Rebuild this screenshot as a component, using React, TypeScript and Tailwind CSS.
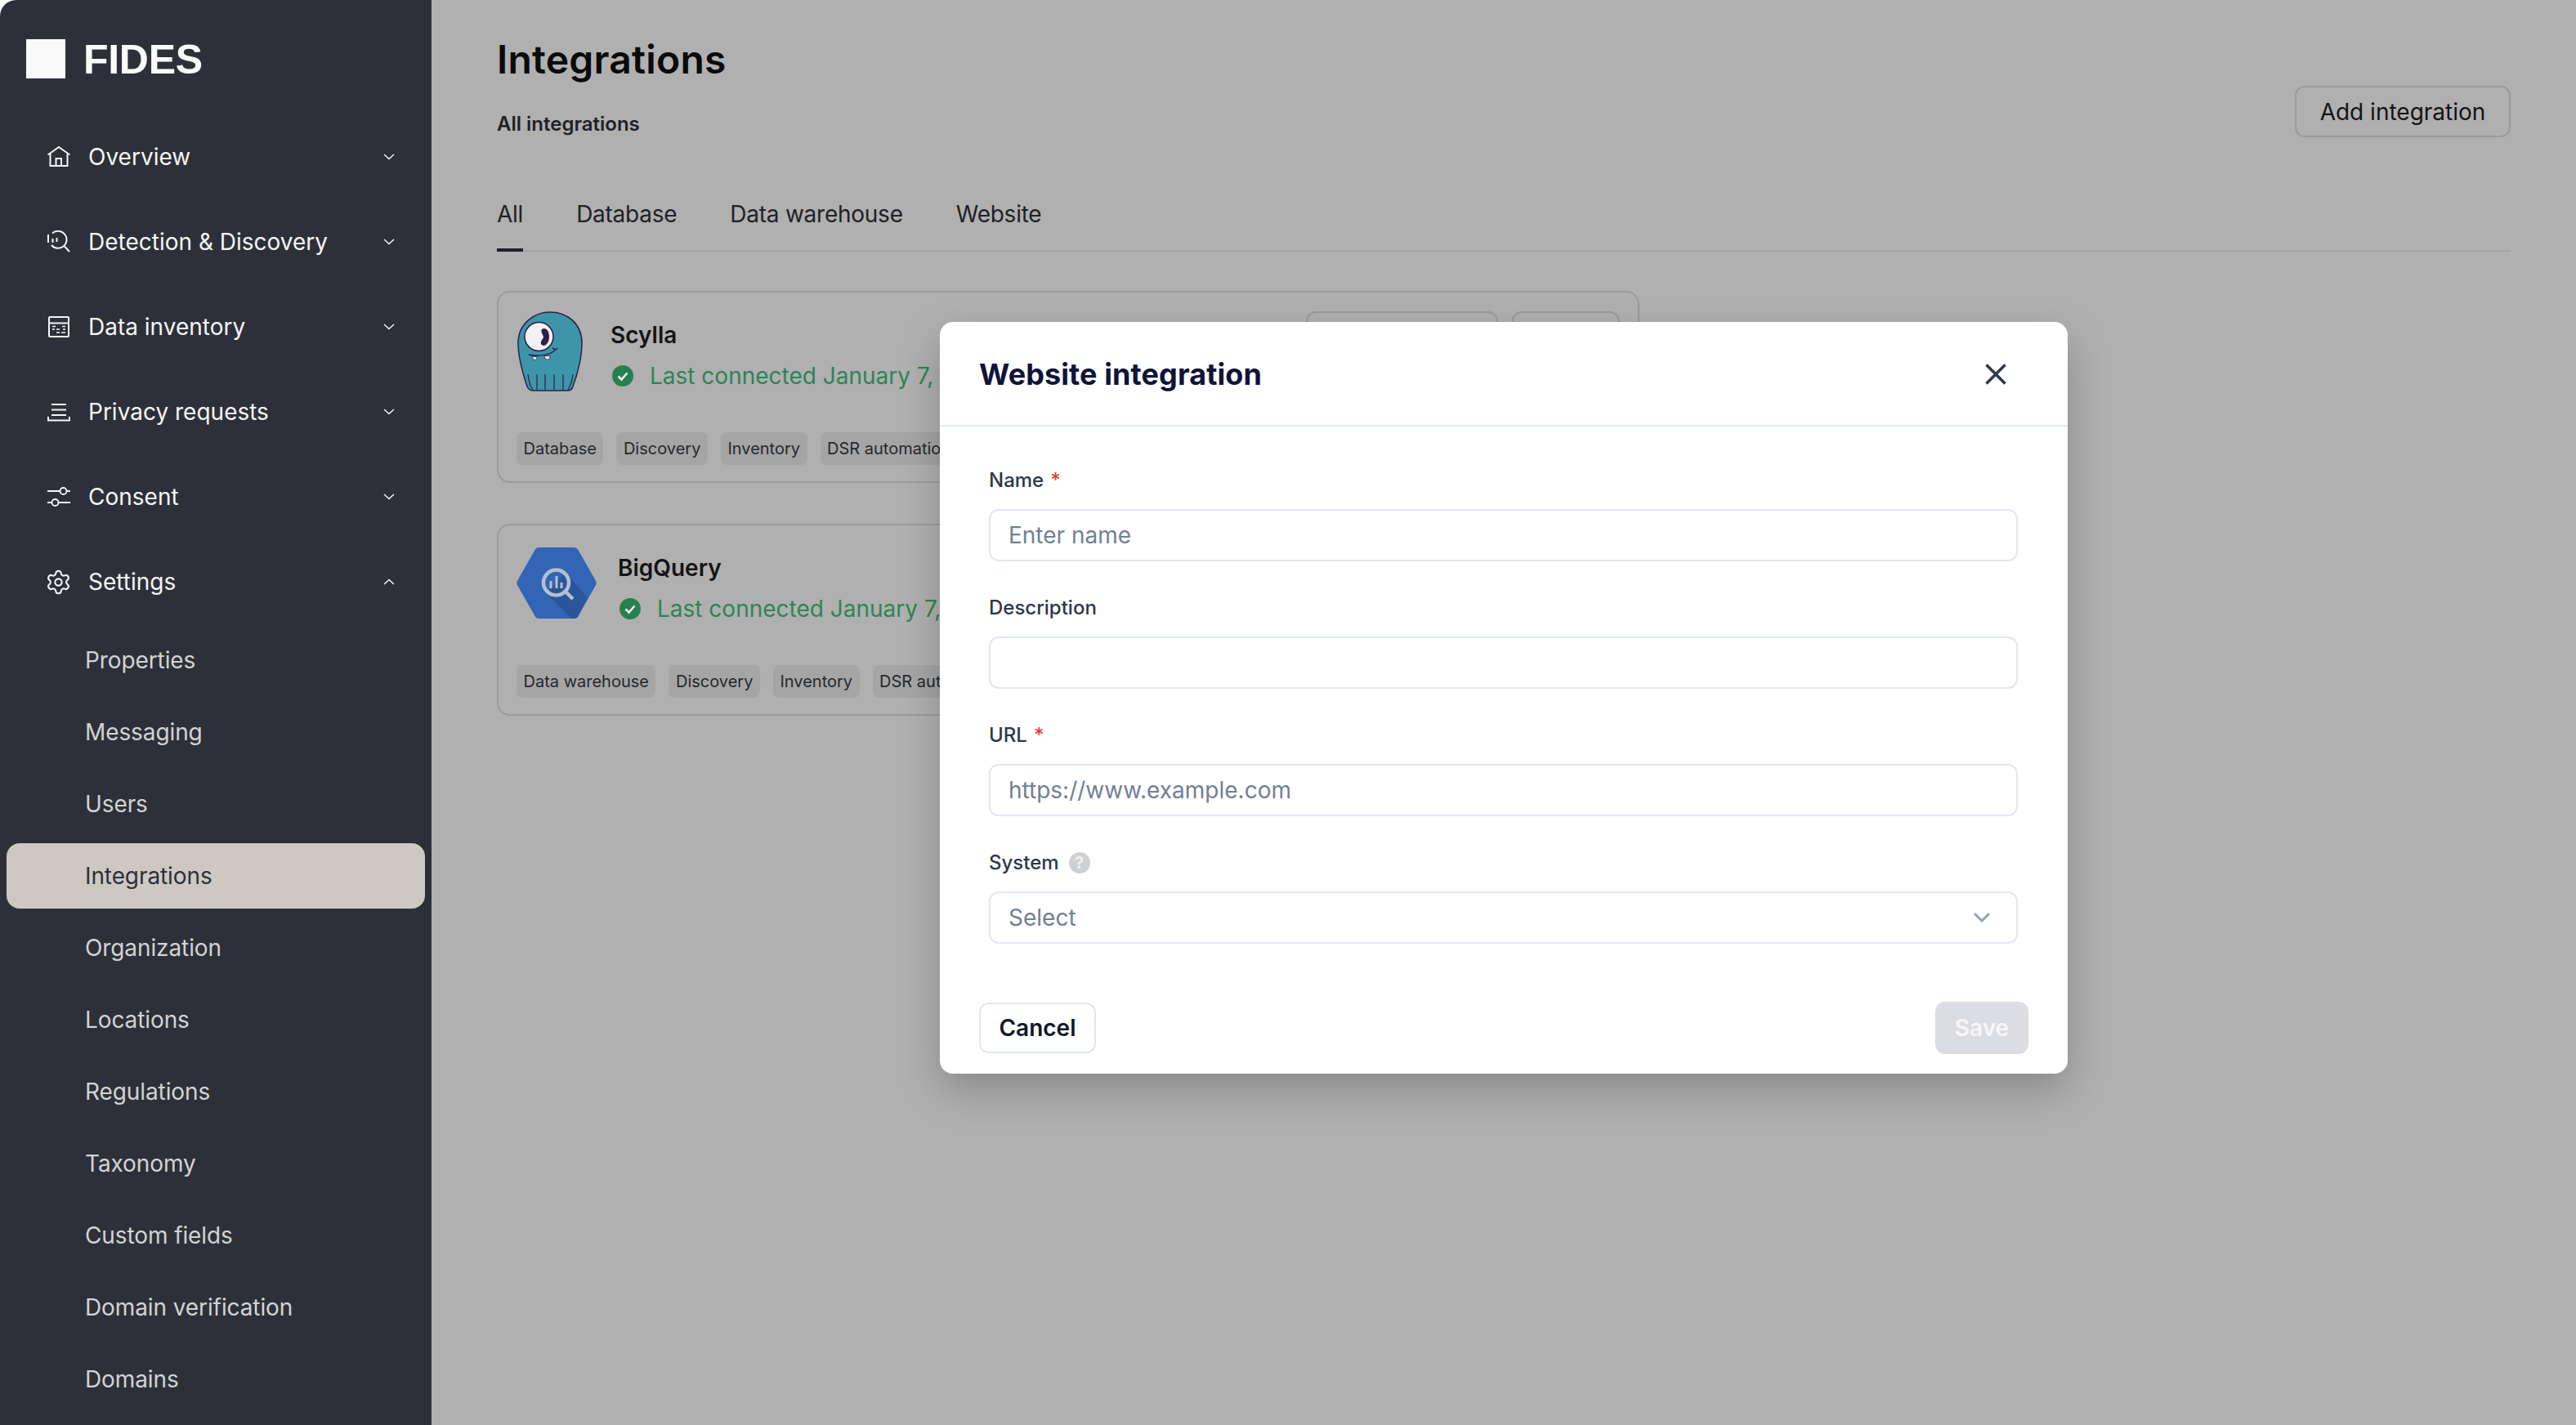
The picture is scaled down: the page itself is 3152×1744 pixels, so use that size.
import { Settings } from "lucide-react";

const fontStack = "font-['Inter','Noto_Sans',sans-serif]";

const HomeIcon = () => (
  <svg width="28" height="28" viewBox="0 0 28 28" fill="none" stroke="currentColor" strokeWidth="2">
    <path d="M0.5 11.5 14 2 27.5 11.5" />
    <path d="M3.5 10V25H24.5V10" />
    <path d="M10.5 25V16H17V25" />
  </svg>
);

const DetectionIcon = () => (
  <svg width="28" height="28" viewBox="0 0 28 28" fill="none" stroke="currentColor" strokeWidth="2">
    <path d="M6 3.5A10.5 10.5 0 1 1 5 18" />
    <path d="M21 19.5 27 26" />
    <path d="M1 5V15M6.5 10V15M11.5 9V14" />
  </svg>
);

const InventoryIcon = () => (
  <svg width="28" height="28" viewBox="0 0 28 28" fill="none" stroke="currentColor" strokeWidth="2">
    <rect x="2" y="2" width="24" height="24" rx="1" />
    <path d="M2 9.5H26" />
    <path strokeWidth="1.5" d="M6 13.5H10M18 13.5H22M6 17H9M11 17H15M19 17H22M11 21H15M17 21H22" />
  </svg>
);

const RequestsIcon = () => (
  <svg width="28" height="28" viewBox="0 0 28 28" fill="none" stroke="currentColor" strokeWidth="2">
    <path d="M5 5H23M5 11.5H23M5 18H23" />
    <path d="M1 20V24.5H27V20" />
  </svg>
);

const ConsentIcon = () => (
  <svg width="28" height="28" viewBox="0 0 28 28" fill="none" stroke="currentColor" strokeWidth="1.8">
    <path d="M0 7H15M24 7H28M0 21H5M14 21H28" />
    <circle cx="19.5" cy="7" r="4" />
    <circle cx="9.5" cy="21" r="4" />
  </svg>
);

const Chevron = ({ up }: { up?: boolean }) => (
  <svg width="14" height="8" viewBox="0 0 14 8" fill="none" stroke="currentColor" strokeWidth="1.5" className={up ? "rotate-180" : ""}>
    <path d="M1 1 7 6.5 13 1" />
  </svg>
);

const ScyllaLogo = () => (
  <svg width="80" height="98" viewBox="13 11 80 98" className="ml-[1px] shrink-0">
    <path
      d="M14 50C14 25 35 12 53 12C73 12 92 25 92 50C92 68 86 90 81 103C80 107 77 108 74 108H32C29 108 27 107 25 103C20 88 14 68 14 50Z"
      fill="#3f95a8"
      stroke="#2a1f4d"
      strokeWidth="1.5"
    />
    <circle cx="39.5" cy="42" r="17.5" fill="#f2f2f4" stroke="#2a1f4d" strokeWidth="1.5" />
    <path d="M43 33C47 30 52 34 52 42C52 50 47 55 43 52C40 50 43 46 45 43C45 40 41 36 43 33Z" fill="#2a1f4d" />
    <path d="M27 64C36 66 50 66 59 59M56 55.5C58 58 60 59 62 56" fill="none" stroke="#2a1f4d" strokeWidth="1.5" />
    <path d="M31 66.5H37C37 70 35 71 34 70.5C32.5 70 31.5 68 31 66.5ZM46 65.5H53C53 70 51 70 49.5 70C47.5 70 46.5 68 46 65.5Z" fill="#e8e8e8" stroke="#2a1f4d" strokeWidth="0.8" />
    <path d="M26 88C27 96 28 102 32 107M37 88V107M47 88V107M58 88V107M69 88V107M81 88C80 96 78 102 75 107" fill="none" stroke="#2a1f4d" strokeWidth="1.2" />
  </svg>
);

const BigQueryLogo = () => (
  <svg width="98" height="87" viewBox="0 0 98 87" className="mt-[4px] shrink-0">
    <path
      d="M22 4C23 1.5 25 0 28 0H70C73 0 75 1.5 76 4L96.5 40C98 42.5 98 44.5 96.5 47L76 83C75 85.5 73 87 70 87H28C25 87 23 85.5 22 83L1.5 47C0 44.5 0 42.5 1.5 40Z"
      fill="#3265b5"
    />
    <path d="M37 57 60 30 87 62 76 83C75 85.5 73 87 70 87H67Z" fill="#2b559b" />
    <circle cx="48.5" cy="43" r="15.5" fill="none" stroke="#b5bfcf" strokeWidth="4.5" />
    <path d="M60 54 69 63" stroke="#b5bfcf" strokeWidth="4.5" />
    <path d="M42 41V50M49 35V50M55 43V50" stroke="#b5bfcf" strokeWidth="3" />
  </svg>
);

const CheckBadge = () => (
  <svg width="26" height="26" viewBox="0 0 26 26" className="ml-[2px] shrink-0">
    <circle cx="13" cy="13" r="13" fill="#277f51" />
    <path d="M7.5 13.5 11.5 17.5 18.5 9.5" fill="none" stroke="#e8efe9" strokeWidth="2.6" />
  </svg>
);

const mainNav = [
  { label: "Overview", icon: <HomeIcon /> },
  { label: "Detection & Discovery", icon: <DetectionIcon /> },
  { label: "Data inventory", icon: <InventoryIcon /> },
  { label: "Privacy requests", icon: <RequestsIcon /> },
  { label: "Consent", icon: <ConsentIcon /> },
];

const settingsNav = [
  "Properties",
  "Messaging",
  "Users",
  "Integrations",
  "Organization",
  "Locations",
  "Regulations",
  "Taxonomy",
  "Custom fields",
  "Domain verification",
  "Domains",
];

const integrations = [
  {
    name: "Scylla",
    logo: <ScyllaLogo />,
    gap: "ml-[34px]",
    tags: ["Database", "Discovery", "Inventory", "DSR automation"],
  },
  {
    name: "BigQuery",
    logo: <BigQueryLogo />,
    gap: "ml-[26px]",
    tags: ["Data warehouse", "Discovery", "Inventory", "DSR automation"],
  },
];

const NavRow = ({ label, icon, open }: { label: string; icon: React.ReactNode; open?: boolean }) => (
  <div className="flex h-[104px] items-center pl-[58px] pr-[45px] text-[#f5f5f6]">
    <span className="flex w-[50px] shrink-0">{icon}</span>
    <span className="flex-1 text-[28px]">{label}</span>
    <Chevron up={open} />
  </div>
);

const Sidebar = () => (
  <aside className="h-full w-[528px] shrink-0 overflow-hidden rounded-tl-[20px] bg-[#2d3038]">
    <div className="flex h-[140px] items-start pl-[32px] pt-[48px]">
      <div className="h-[48px] w-[48px] bg-[#fafafa]" />
      <span className="ml-[22px] mt-[1px] font-['Liberation_Sans',sans-serif] text-[50px] font-bold leading-[48px] tracking-[-0.3px] text-[#fafafa]">
        FIDES
      </span>
    </div>
    {mainNav.map((item) => (
      <NavRow key={item.label} label={item.label} icon={item.icon} />
    ))}
    <NavRow label="Settings" icon={<Settings size={33} strokeWidth={1.5} className="-ml-[3px] -my-[3px] shrink-0" />} open />
    <div className="flex flex-col gap-[8px] px-[8px] pt-[4px]">
      {settingsNav.map((item) => (
        <div
          key={item}
          className={`flex h-[80px] items-center rounded-[16px] pl-[96px] text-[28px] tracking-[-0.1px] ${
            item === "Integrations" ? "bg-[#cdc9c2] text-[#2d3038]" : "text-[#d2d3d6]"
          }`}
        >
          {item}
        </div>
      ))}
    </div>
  </aside>
);

const IntegrationCard = ({ item }: { item: (typeof integrations)[number] }) => (
  <div className="h-[235px] w-[1398px] rounded-[16px] border-2 border-[#9b9b9b] px-[22px] pt-[23px]">
    <div className="flex h-[98px] items-start">
      {item.logo}
      <div className={`${item.gap} pt-[9px]`}>
        <div className="text-[28px] font-semibold leading-[40px] text-[#141414]">{item.name}</div>
        <div className="mt-[10px] flex h-[40px] items-center text-[28px] text-[#2e8457]">
          <CheckBadge />
          <span className="ml-[20px]">Last connected January 7,</span>
        </div>
      </div>
      <div className="ml-auto flex gap-[17px]">
        <div className="h-[64px] w-[235px] rounded-[12px] border-2 border-[#9b9b9b]" />
        <div className="h-[64px] w-[132px] rounded-[12px] border-2 border-[#9b9b9b]" />
      </div>
    </div>
    <div className="mt-[50px] flex gap-[16px]">
      {item.tags.map((tag) => (
        <span key={tag} className="flex h-[40px] items-center rounded-[8px] bg-[#a5a5a5] px-[8.5px] text-[20px] text-[#26282d]">
          {tag}
        </span>
      ))}
    </div>
  </div>
);

const Field = ({ label, required, help, children }: { label: string; required?: boolean; help?: boolean; children: React.ReactNode }) => (
  <div className="mb-[41px] last:mb-0">
    <div className="mb-[19px] flex h-[32px] items-center text-[24px] font-medium text-[#2d3748]">
      {label}
      {required && <span className="ml-[8px] text-[#e53e3e]">*</span>}
      {help && (
        <span className="ml-[12px] flex h-[26px] w-[26px] items-center justify-center rounded-full bg-[#cfd0d2] text-[20px] font-bold text-[#f2f2f2]">
          ?
        </span>
      )}
    </div>
    {children}
  </div>
);

const inputClass =
  "block h-[64px] w-full rounded-[12px] border-2 border-[#e2e8f0] bg-white px-[22px] text-[28px] outline-none placeholder:text-[#718096]";

const WebsiteModal = () => (
  <div className="h-[920px] w-[1380px] rounded-[16px] bg-white shadow-[0_20px_50px_rgba(0,0,0,0.22)]">
    <div className="flex h-[128px] items-center justify-between border-b-2 border-[#e2e8f0] pl-[48px] pr-[75px]">
      <h2 className="pt-[2px] text-[36px] font-bold tracking-[0.1px] text-[#0f1438]">Website integration</h2>
      <svg width="26" height="26" viewBox="0 0 26 26" fill="none" stroke="#2d3748" strokeWidth="3.5" className="mt-[2px]">
        <path d="M1.5 1.5 24.5 24.5M24.5 1.5 1.5 24.5" />
      </svg>
    </div>
    <div className="pl-[60px] pr-[61px] pt-[50px]">
      <Field label="Name" required>
        <input className={inputClass} placeholder="Enter name" />
      </Field>
      <Field label="Description">
        <input className={inputClass} />
      </Field>
      <Field label="URL" required>
        <input className={inputClass} placeholder="https://www.example.com" />
      </Field>
      <Field label="System" help>
        <div className="flex h-[64px] items-center justify-between rounded-[12px] border-2 border-[#e2e8f0] pl-[22px] pr-[32px] text-[28px] text-[#718096]">
          Select
          <svg width="20" height="12" viewBox="0 0 20 12" fill="none" stroke="#94a3b8" strokeWidth="3">
            <path d="M1 1 10 10 19 1" />
          </svg>
        </div>
      </Field>
    </div>
    <div className="mt-[71px] flex items-center justify-between px-[48px]">
      <button className="h-[62px] w-[143px] rounded-[12px] border-2 border-[#e2e8f0] bg-white text-[28px] font-semibold text-[#111827]">
        Cancel
      </button>
      <button className="h-[64px] w-[114px] rounded-[12px] bg-[#dcdde2] text-[28px] font-semibold text-[#f7f7f9]">
        Save
      </button>
    </div>
  </div>
);

export default function App() {
  return (
    <div className={`${fontStack} flex h-[1744px] w-[3152px] overflow-hidden bg-white`}>
      <Sidebar />
      <main className="relative flex-1 bg-[#b0b0b0] pl-[80px] pr-[80px] pt-[43px] text-[#141414]">
        <h1 className="text-[48px] font-semibold leading-[60px] tracking-[0.2px] text-[#0a0a0a]">Integrations</h1>
        <div className="mt-[1px] flex h-[64px] items-end justify-between">
          <span className="text-[24px] font-semibold leading-[32px] text-[#1f2126]">All integrations</span>
          <button className="h-[63px] w-[264px] rounded-[12px] border-2 border-[#9b9b9b] text-[28px] text-[#141414]">
            Add integration
          </button>
        </div>
        <div className="mt-[74px] flex gap-[65px] border-b-2 border-[#a3a3a3] text-[28px] leading-[40px] tracking-[-0.25px] text-[#1f2126]">
          <span className="relative pb-[24px]">
            All
            <span className="absolute bottom-[-2px] left-0 right-0 h-[4px] bg-[#1f2126]" />
          </span>
          <span className="pb-[24px]">Database</span>
          <span className="pb-[24px]">Data warehouse</span>
          <span className="pb-[24px]">Website</span>
        </div>
        <div className="mt-[48px] flex flex-col gap-[50px]">
          {integrations.map((item) => (
            <IntegrationCard key={item.name} item={item} />
          ))}
        </div>
        <div className="absolute inset-0 flex justify-center pt-[394px]">
          <WebsiteModal />
        </div>
      </main>
    </div>
  );
}
